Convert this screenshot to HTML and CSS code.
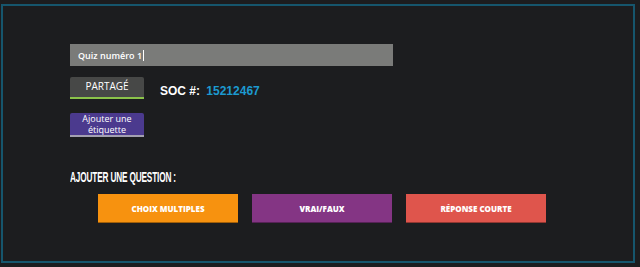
FILE: index.html
```html
<!DOCTYPE html>
<html lang="fr">
<head>
    <meta charset="UTF-8">
    <meta name="viewport" content="width=device-width, initial-scale=1.0">
    <title>Quiz</title>
    <link rel="stylesheet" href="styles.css">
</head>
<body>
    <div class="quiz-frame">
        <div class="quiz-name">
            <span>Quiz numéro 1</span><span class="caret"></span>
        </div>

        <div class="share-row">
            <button class="btn-share">PARTAGÉ</button>
            <div class="soc">SOC #: <span class="soc-number">15212467</span></div>
        </div>

        <button class="btn-tag">Ajouter une étiquette</button>

        <h2 class="add-title">AJOUTER UNE QUESTION :</h2>

        <div class="question-types">
            <button class="qbtn qbtn-multi">CHOIX MULTIPLES</button>
            <button class="qbtn qbtn-truefalse">VRAI/FAUX</button>
            <button class="qbtn qbtn-short">RÉPONSE COURTE</button>
        </div>
    </div>
</body>
</html>
```

FILE: styles.css
```css
:root {
    --bg-color: #1c1d1f;
    --frame-color: #16566d;
    --input-color: #7a7b79;
    --share-color: #474847;
    --share-line: #8bc34a;
    --tag-color: #4b3a8e;
    --soc-blue: #1c9ad0;
    --orange: #f7920f;
    --purple: #843584;
    --red: #df554c;
}

body {
    margin: 0;
    background-color: var(--bg-color);
    font-family: 'Open Sans', sans-serif;
    color: #ffffff;
}

/* Frame */
.quiz-frame {
    margin: 4px 5px 0 1px;
    border: 2px solid var(--frame-color);
    padding: 38px 0 0 67px;
    box-sizing: border-box;
    height: 259px;
}

/* Quiz name input */
.quiz-name {
    width: 323px;
    height: 22px;
    background-color: var(--input-color);
    display: flex;
    align-items: center;
    padding-left: 8px;
    box-sizing: border-box;
    font-size: 9px;
    font-weight: 600;
}

.caret {
    display: inline-block;
    width: 1px;
    height: 11px;
    background-color: #ffffff;
    margin-left: 1px;
}

/* Share row */
.share-row {
    display: flex;
    align-items: center;
    margin-top: 11px;
}

.btn-share {
    width: 74px;
    height: 22px;
    background-color: var(--share-color);
    border: none;
    border-bottom: 2px solid var(--share-line);
    border-radius: 2px 2px 0 0;
    color: #ffffff;
    font-family: 'Open Sans', sans-serif;
    font-size: 10px;
    padding: 0 0 3px;
}

.soc {
    margin-left: 16px;
    margin-top: 6px;
    font-family: 'Liberation Sans', Arial, sans-serif;
    font-weight: bold;
    font-size: 12px;
}

.soc-number {
    color: var(--soc-blue);
    margin-left: 3px;
}

/* Tag button */
.btn-tag {
    display: block;
    margin-top: 14px;
    width: 74px;
    height: 24px;
    background-color: var(--tag-color);
    border: none;
    border-bottom: 2px solid #a3a0b0;
    border-radius: 2px 2px 0 0;
    color: #ffffff;
    font-family: 'Open Sans', sans-serif;
    font-size: 9px;
    line-height: 11px;
    padding: 0 4px 1px;
}

/* Add question */
.add-title {
    margin: 32px 0 0;
    font-family: 'Liberation Sans', sans-serif;
    font-size: 15px;
    line-height: 15px;
    font-weight: bold;
    letter-spacing: -0.3px;
    white-space: nowrap;
    transform: scaleX(0.55);
    transform-origin: left;
}

.question-types {
    display: flex;
    gap: 14px;
    margin: 10px 0 0 28px;
}

.qbtn {
    width: 140px;
    height: 29px;
    border: none;
    border-bottom: 1px solid rgba(0, 0, 0, 0.35);
    color: #ffffff;
    font-family: 'Open Sans', sans-serif;
    font-weight: 800;
    font-size: 8px;
    padding: 0;
}

.qbtn-multi {
    background-color: var(--orange);
}

.qbtn-truefalse {
    background-color: var(--purple);
}

.qbtn-short {
    background-color: var(--red);
}
```
